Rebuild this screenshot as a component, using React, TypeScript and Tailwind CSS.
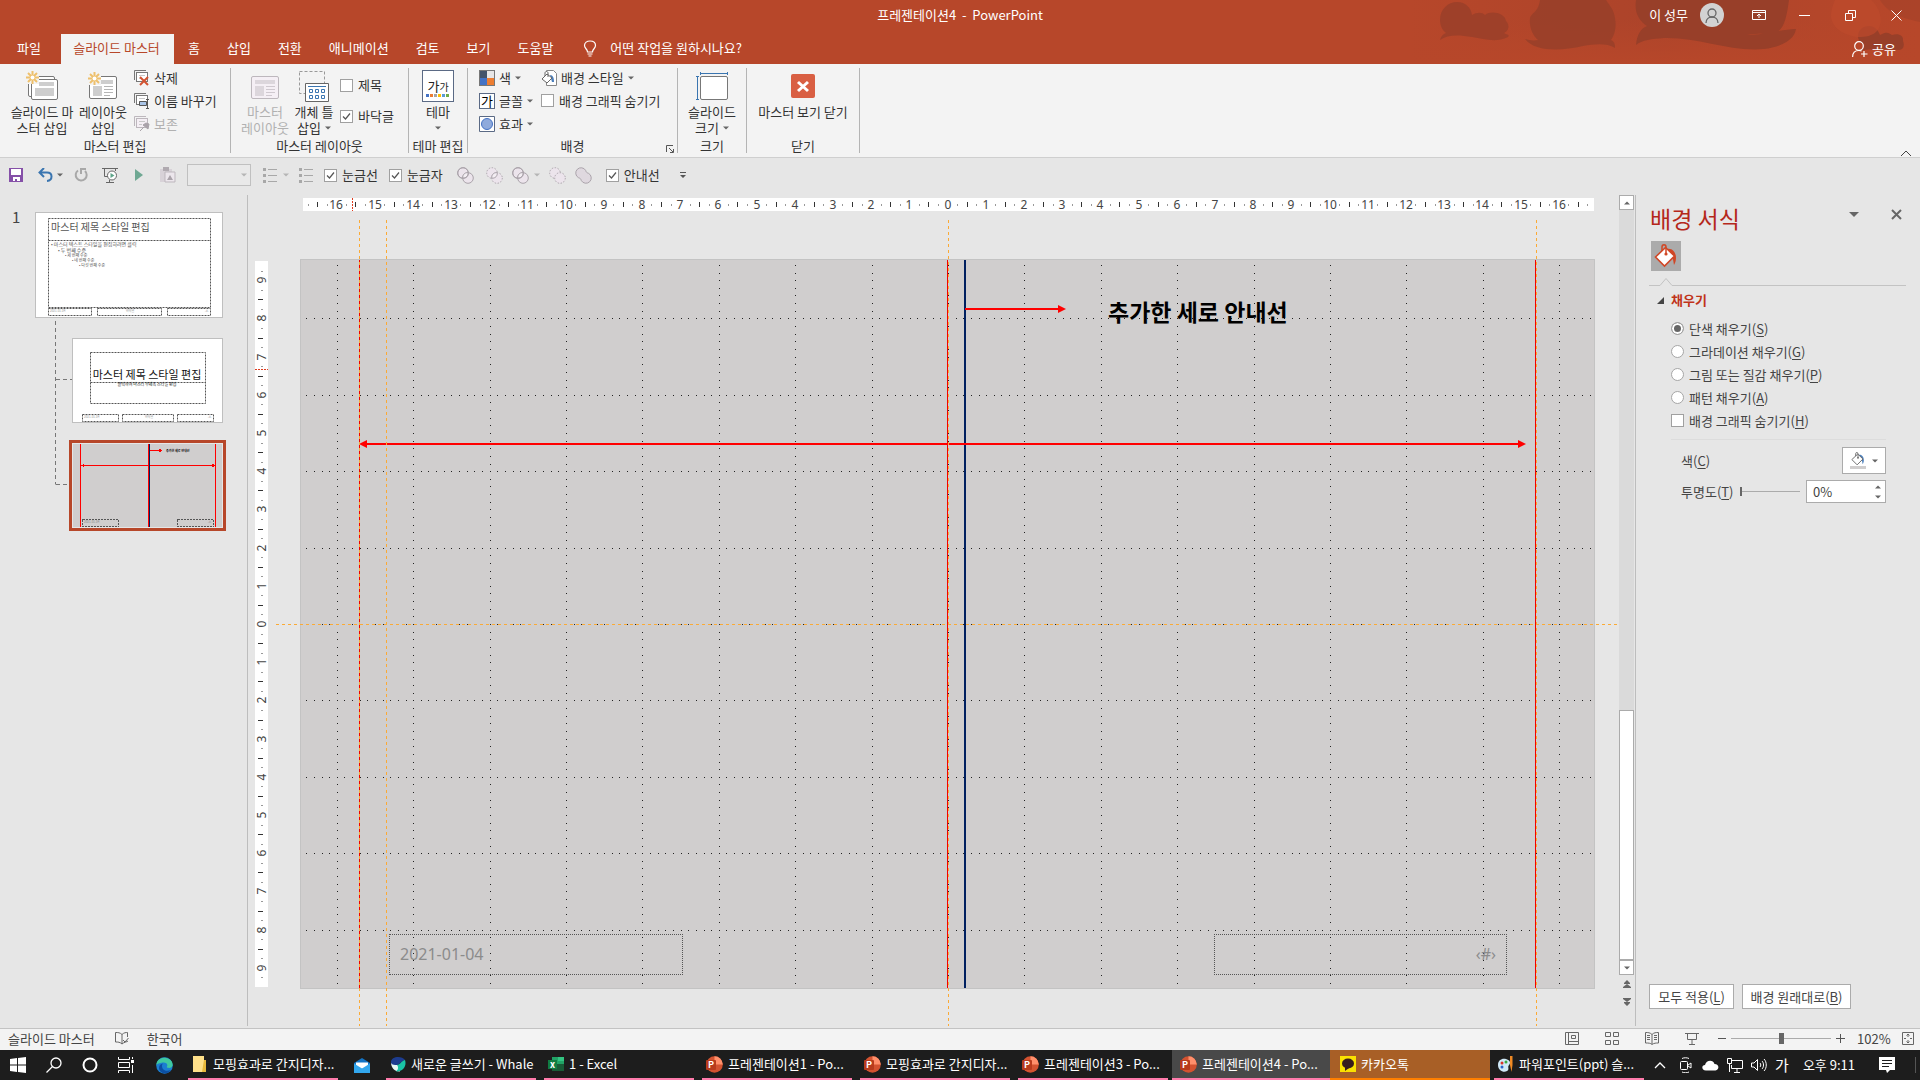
import { ReactNode, useState } from "react";
import clsx from "clsx";

const UNIT = 38.2;

const TABS = ["홈", "삽입", "전환", "애니메이션", "검토", "보기", "도움말"];

const FILL_TYPES = [
  { id: "solid", label: "단색 채우기", accel: "S" },
  { id: "gradient", label: "그라데이션 채우기", accel: "G" },
  { id: "picture", label: "그림 또는 질감 채우기", accel: "P" },
  { id: "pattern", label: "패턴 채우기", accel: "A" },
];

function Caret({ className = "text-[#666]", up = false }: { className?: string; up?: boolean }) {
  return (
    <svg width="6" height="4" viewBox="0 0 6 4" className={clsx("shrink-0", className)}>
      <path d={up ? "M0 3.5h6L3 .5z" : "M0 .5h6L3 3.5z"} fill="currentColor" />
    </svg>
  );
}

function CheckItem({ label, checked = false, id }: { label: ReactNode; checked?: boolean; id: string }) {
  return (
    <label htmlFor={id} className="flex items-center gap-[5px] whitespace-nowrap">
      <span className="relative flex">
        <input
          id={id}
          type="checkbox"
          defaultChecked={checked}
          className="peer h-[13px] w-[13px] appearance-none border border-[#a0a0a0] bg-white"
        />
        <svg viewBox="0 0 13 13" className="pointer-events-none absolute inset-0 hidden h-[13px] w-[13px] peer-checked:block">
          <path d="M3 6.5 5.5 9 10 3.5" fill="none" stroke="#555" strokeWidth="1.2" />
        </svg>
      </span>
      {label}
    </label>
  );
}

function Accel({ text, k }: { text: string; k: string }) {
  return (
    <span>
      {text}(<span className="underline underline-offset-2">{k}</span>)
    </span>
  );
}

/* ---------- title bar ---------- */

function TitleArt() {
  return (
    <svg viewBox="0 0 540 64" className="absolute top-0 right-0 h-16 w-[540px]">
      <defs>
        <linearGradient id="art" x1="0" x2="1">
          <stop offset="0" stopColor="#a5412a" stopOpacity="0" />
          <stop offset="0.5" stopColor="#a5412a" stopOpacity="0.6" />
          <stop offset="1" stopColor="#b7472a" stopOpacity="0.3" />
        </linearGradient>
        <linearGradient id="artFade" x1="0" y1="0" x2="0" y2="1">
          <stop offset="0.3" stopColor="#b7472a" stopOpacity="0" />
          <stop offset="1" stopColor="#b7472a" />
        </linearGradient>
      </defs>
      <rect x="30" width="510" height="64" fill="url(#art)" />
      <rect x="30" width="510" height="64" fill="url(#artFade)" />
      <g fill="#983f29">
        <path d="M60 20c0-11 8-18 17-18 9 0 14 6 15 13 5-3 10-3 13 0 6-5 20-2 21 6 4 4 3 10-2 12 4 2 6 2 4 4-12 6-24 2-36 0-12-2-24-3-32 3 1-4 3-6 6-7-4-3-6-8-6-13z" opacity=".8" />
        <path d="M150 18c2-6 8-5 10-18h66c4 6 8 10 9 18 2 10-1 18-4 22 4 2 4 5 4 8-8-5-20-4-32-2-22 5-48 6-58-7 4 1 8 2 13 1-6-5-9-14-8-22z" opacity=".85" />
        <path d="M256 0h153c-2 14-4 28-12 32-6 2-22 1-30 3 16 0 42-7 49-6-2 12-16 18-32 20-34 3-66-12-100-11-12 1-22 2-28 7 1-10 4-16 11-19-8-5-13-14-11-26z" />
        <path d="M478 36c0-6 5-10 11-10s9 4 11 9c7-4 9-2 12 0 6-2 12 0 11 6 2 5 0 9-4 9-14 0-26-2-38 1 1-3 2-5 4-6-5-2-7-5-7-9z" />
        <path d="M500 0h40v22c-14-3-32-8-40-22z" opacity=".4" />
      </g>
      <path d="M455 0h36c12 10 14 30 0 35-14 6-38-2-40-18 0-8 2-12 4-17z" fill="#bd4a2c" opacity=".7" />
    </svg>
  );
}

function Header() {
  return (
    <header className="relative shrink-0 bg-[#b7472a] text-white">
      <TitleArt />
      <div className="relative flex h-[30px] items-center justify-end pr-[18px]">
        <h1 className="absolute inset-x-0 text-center whitespace-pre">프레젠테이션4  -  PowerPoint</h1>
        <button className="relative mr-7 flex items-center gap-3">
          이 성무
          <svg width="24" height="24" viewBox="0 0 24 24" fill="none" stroke="#666" strokeWidth="1.3">
            <circle cx="12" cy="12" r="12" fill="#d2d2d2" stroke="none" />
            <circle cx="12" cy="10" r="4" />
            <path d="M6 20c0-8 12-8 12 0" />
          </svg>
        </button>
        <button aria-label="리본 메뉴 표시 옵션" className="relative mr-[33px]">
          <svg width="14" height="12" viewBox="0 0 14 12" fill="none" stroke="#fff">
            <path d="M.5 1.5h13v9H.5zM.5 3.5h13M7 9V5M5 7l2-2 2 2" />
          </svg>
        </button>
        <button aria-label="최소화" className="relative mr-[35px]">
          <svg width="11" height="11" stroke="#fff"><path d="M0 5.5h11" /></svg>
        </button>
        <button aria-label="이전 크기로" className="relative mr-[35px]">
          <svg width="11" height="11" viewBox="0 0 11 11" fill="none" stroke="#fff">
            <path d="M.5 3.5h7v7h-7zM3.5 3V.5h7v7H8" />
          </svg>
        </button>
        <button aria-label="닫기" className="relative">
          <svg width="11" height="11" viewBox="0 0 11 11" stroke="#fff"><path d="m.5.5 10 10M10.500.5l-10 10" /></svg>
        </button>
      </div>
      <nav className="relative mt-1 flex h-[30px] items-stretch gap-px">
        <button className="w-[60px] pr-[2px] pb-[2px]">파일</button>
        <button className="w-[113px] bg-[#f3f3f3] pr-[2px] pb-[2px] text-[#b7472a]">슬라이드 마스터</button>
        {TABS.map((t) => (
          <button key={t} className="px-[13px] pb-[2px] whitespace-nowrap">{t}</button>
        ))}
        <button className="ml-4 flex items-center gap-[13px] pb-[2px]">
          <svg width="14" height="17" viewBox="0 0 14 17" fill="none" stroke="#fff" strokeWidth="1.2">
            <path d="M4.500 12c0-3-3-3.500-3-6.500C1.500 2.500 4 1 7 1s5.500 1.500 5.500 4.500c0 3-3 3.500-3 6.500zM4.500 14h5M5.500 16h3" />
          </svg>
          어떤 작업을 원하시나요?
        </button>
        <button className="mr-[24px] ml-auto flex items-center gap-1">
          <svg width="16" height="17" viewBox="0 0 16 17" fill="none" stroke="#fff" strokeWidth="1.2">
            <circle cx="7" cy="5" r="4.300" />
            <path d="M.6 16c0-4 2.500-6.500 6.400-6.500 1 0 2 .2 2.600.6M12 10v6M9 13h6.500" />
          </svg>
          공유
        </button>
      </nav>
    </header>
  );
}

/* ---------- ribbon ---------- */

function Group({ label, className, children, launcher }: { label: string; className: string; children: ReactNode; launcher?: boolean }) {
  return (
    <section className={clsx("relative my-1 flex flex-col border-r border-[#b4b4b4]", className)}>
      <div className="flex flex-1">{children}</div>
      <h2 className="h-[14px] text-center leading-[14px] whitespace-nowrap">{label}</h2>
      {launcher && (
        <button aria-label="배경 서식" className="absolute right-[3px] bottom-0">
          <svg width="8" height="8" viewBox="0 0 8 8" fill="none" stroke="#555"><path d="M.5 7V.5H7M3 3l4 4M7.500 4v3.500H4" /></svg>
        </button>
      )}
    </section>
  );
}

function BigButton({ icon, lines, className, disabled, caret }: { icon: ReactNode; lines: string[]; className: string; disabled?: boolean; caret?: boolean }) {
  return (
    <button disabled={disabled} className={clsx("flex flex-col items-center self-start leading-4 whitespace-nowrap disabled:text-[#b1b1b1]", className)}>
      <span className="flex h-9 items-center justify-center">{icon}</span>
      {lines.map((l, i) => (
        <span key={l + i} className="flex h-4 items-center gap-1">
          {l}
          {caret && i === lines.length - 1 && <Caret />}
        </span>
      ))}
    </button>
  );
}

function Sun() {
  return (
    <g stroke="#eec06c" strokeWidth="2">
      <path d="M6.500 0v13M0 6.500h13M2 2l9 9M11 2l-9 9" />
      <circle cx="6.500" cy="6.500" r="2" fill="#fff" stroke="none" />
    </g>
  );
}

function InsertMasterIcon() {
  return (
    <svg width="32" height="30" viewBox="0 0 32 30">
      <g fill="#fff" stroke="#777">
        <rect x="2.500" y="5.500" width="26" height="20" rx="1.500" />
        <rect x="5.500" y="8.500" width="26" height="20" rx="1.500" />
      </g>
      <path d="M13 11h15v4H13zM9 17h19v8H9z" fill="#cecece" />
      <path d="M0 0h13v13H0z" fill="#f3f3f3" />
      <Sun />
    </svg>
  );
}

function LayoutIcon({ sun, dim }: { sun?: boolean; dim?: boolean }) {
  return (
    <svg width="30" height="28" viewBox="0 0 30 28">
      <rect x="1.500" y="4.500" width="27" height="22" rx="1.500" fill={dim ? "#f5eff5" : "#fff"} stroke={dim ? "#bdb7bd" : "#777"} />
      <path d="M5 8h20v4H5zM5 14h9v10H5z" fill={dim ? "#dcd6dc" : "#cecece"} />
      <path d="M16 14.500h9M16 17.500h9M16 20.500h9M16 23.500h6" stroke={dim ? "#cfc8cf" : "#b5b5b5"} />
      {sun && <path d="M0 0h13v13H0z" fill="#f3f3f3" />}
      {sun && <Sun />}
    </svg>
  );
}

function SmallStack({ kind }: { kind: "delete" | "rename" | "keep" }) {
  const line = kind === "keep" ? "#bdb7bd" : "#777";
  return (
    <svg width="16" height="16" viewBox="0 0 16 16" fill="none">
      <path d="M.5 10V.5H12" stroke={line} />
      <rect x="2.500" y="2.500" width="11" height="9" fill={kind === "keep" ? "#f5eff5" : "#fff"} stroke={line} />
      <path d="M5 5.500h6M5 8.500h3" stroke="#c9c9c9" />
      {kind === "delete" && <path d="m6 7 8 8M14 7l-8 8" stroke="#d35230" strokeWidth="2" />}
      {kind === "rename" && <path d="M5.500 8.500h7v4h-7z" fill="#a9c4e6" stroke="#555" />}
      {kind === "rename" && <path d="M13.500 7v8M12 6.500h3M12 15.500h3" stroke="#555" />}
      {kind === "keep" && <path d="m6 15 4-4M9 9l5 4 1-5-3-1z" stroke="#aaa3aa" fill="#aaa3aa" />}
    </svg>
  );
}

function SmallButton({ children, disabled }: { children: ReactNode; disabled?: boolean }) {
  return (
    <button disabled={disabled} className="flex h-[23px] items-center gap-1 pb-1 whitespace-nowrap disabled:text-[#b1b1b1]">
      {children}
    </button>
  );
}

function PaintIcon({ line = "#666", drip = "#4a7ebb", size = 16 }: { line?: string; drip?: string; size?: number }) {
  return (
    <svg width={size} height={size} viewBox="0 0 24 24" fill="none">
      <path d="M13 5c6-1 9 4 9 9 0 3-1 5-2 7-1-5-1-9-4-12z" fill={drip} />
      <path d="M1.500 13 11.500 3.500 20.500 12 10.500 22z" fill="#fff" stroke={line} strokeWidth="1.600" />
      <path d="M8 7V3c0-3 4-3 4 0v7" stroke={line} strokeWidth="1.500" />
      <circle cx="12" cy="10" r="1.600" fill={line} />
    </svg>
  );
}

function Ribbon() {
  return (
    <div className="relative flex h-[94px] shrink-0 border-b border-[#cfcfcf] bg-[#f3f3f3] text-[#333]">
      <Group label="마스터 편집" className="w-[231px]">
        <BigButton className="ml-2 w-[68px]" icon={<InsertMasterIcon />} lines={["슬라이드 마", "스터 삽입"]} />
        <BigButton className="w-[54px]" icon={<LayoutIcon sun />} lines={["레이아웃", "삽입"]} />
        <div className="ml-1 flex flex-col">
          <SmallButton><SmallStack kind="delete" />삭제</SmallButton>
          <SmallButton><SmallStack kind="rename" />이름 바꾸기</SmallButton>
          <SmallButton disabled><SmallStack kind="keep" />보존</SmallButton>
        </div>
      </Group>
      <Group label="마스터 레이아웃" className="w-[178px]">
        <BigButton className="ml-2 w-[52px]" disabled icon={<LayoutIcon dim />} lines={["마스터", "레이아웃"]} />
        <BigButton
          className="w-[46px]"
          caret
          lines={["개체 틀", "삽입"]}
          icon={
            <svg width="30" height="31" viewBox="0 0 30 31" fill="none">
              <path d="M.5.5h25v22H.5z" stroke="#999" strokeDasharray="3 2" />
              <path d="M6.500 12.500h23v18h-23z" fill="#fff" stroke="#666" />
              <path d="M9 15.500h18" stroke="#3a75b0" />
              <path d="M10.500 18.500h3v3h-3zM16.500 18.500h3v3h-3zM22.500 18.500h3v3h-3zM10.500 24.500h3v3h-3zM16.500 24.500h3v3h-3zM22.500 24.500h3v3h-3z" stroke="#3a75b0" />
            </svg>
          }
        />
        <div className="ml-[3px] flex flex-col">
          <div className="flex h-[34px] items-center"><CheckItem id="title" label="제목" /></div>
          <div className="flex h-[28px] items-center"><CheckItem id="footer" label="바닥글" checked /></div>
        </div>
      </Group>
      <Group label="테마 편집" className="w-[59px]">
        <BigButton
          className="w-full"
          lines={["테마", ""]}
          caret
          icon={
            <span className="flex h-8 w-8 flex-col items-center justify-end border border-[#5b6a85] bg-white pb-1 text-[#222]">
              <span className="leading-[15px]">가<span className="text-[10px]">가</span></span>
              <svg width="24" height="3">
                <path d="M0 0h3v3H0z" fill="#4472c4" /><path d="M4 0h3v3H4z" fill="#ed7d31" /><path d="M8 0h3v3H8z" fill="#a5a5a5" />
                <path d="M12 0h3v3h-3z" fill="#ffc000" /><path d="M16 0h3v3h-3z" fill="#5b9bd5" /><path d="M20 0h3v3h-3z" fill="#70ad47" />
              </svg>
            </span>
          }
        />
      </Group>
      <Group label="배경" className="w-[210px]" launcher>
        <div className="ml-[11px] flex w-[62px] flex-col">
          <SmallButton>
            <svg width="16" height="16">
              <path d="M0 0h16v16H0z" fill="#777" /><path d="M1 1h7v7H1z" fill="#44546a" /><path d="M8 1h7v7H8z" fill="#e7e6e6" />
              <path d="M1 8h7v7H1z" fill="#4472c4" /><path d="M8 8h7v7H8z" fill="#ed7d31" />
            </svg>
            색<Caret />
          </SmallButton>
          <SmallButton>
            <span className="flex h-4 w-4 items-center justify-center border border-[#5b6a85] bg-white leading-[14px] text-black">가</span>
            글꼴<Caret />
          </SmallButton>
          <SmallButton>
            <svg width="16" height="16"><path d="M.5.5h15v15H.5z" fill="#fff" stroke="#5b6a85" /><circle cx="8" cy="8" r="5.500" fill="#8faadc" stroke="#4472c4" /></svg>
            효과<Caret />
          </SmallButton>
        </div>
        <div className="flex flex-col">
          <SmallButton>
            <svg width="16" height="16" viewBox="0 0 16 16" fill="none">
              <path d="M5.500.5h7l3 3v12h-10z" fill="#fff" stroke="#888" />
              <path d="M9 5c3 0 4 3 4 7h-2z" fill="#4a7ebb" />
              <path d="M1 9l5-5 5 4-5 5zM4 6V3c0-2 3-2 3 0v4" fill="#fff" stroke="#666" />
            </svg>
            배경 스타일<Caret />
          </SmallButton>
          <div className="flex h-[23px] items-center pb-1"><CheckItem id="hide-bg" label="배경 그래픽 숨기기" /></div>
        </div>
      </Group>
      <Group label="크기" className="w-[69px]">
        <BigButton
          className="w-full"
          caret
          lines={["슬라이드", "크기"]}
          icon={
            <svg width="32" height="28" viewBox="0 0 32 28" fill="none">
              <path d="M4.500 1.500h27M4.500 0v3M31.500 0v3M1.500 4.500v23M0 4.500h3M0 27.500h3" stroke="#3a75b0" />
              <rect x="4.500" y="4.500" width="27" height="23" rx="1.500" fill="#fff" stroke="#777" />
            </svg>
          }
        />
      </Group>
      <Group label="닫기" className="w-[113px]">
        <BigButton
          className="w-full"
          lines={["마스터 보기 닫기"]}
          icon={
            <svg width="24" height="24" viewBox="0 0 24 24">
              <rect width="24" height="24" rx="2" fill="#d95f43" />
              <path d="m7 8 10 9M17 8 7 17" stroke="#fff" strokeWidth="3" />
            </svg>
          }
        />
      </Group>
      <button aria-label="리본 메뉴 축소" className="absolute right-2 bottom-0">
        <svg width="12" height="7" viewBox="0 0 12 7" fill="none" stroke="#444"><path d="m1 6 5-5 5 5" /></svg>
      </button>
    </div>
  );
}

/* ---------- quick access toolbar ---------- */

function ListIcon() {
  return (
    <svg width="14" height="16" viewBox="0 0 14 16" stroke="#a8a8a8">
      <path d="M5 2.500h9M5 8.500h9M5 14.500h9" />
      <path d="M0 2.500h3M0 8.500h3M0 14.500h3" strokeWidth="3" />
    </svg>
  );
}

function ShapesIcon({ kind }: { kind: "combine" | "fragment" | "subtract" | "union" }) {
  if (kind === "union")
    return (
      <svg width="17" height="17" viewBox="0 0 17 17" fill="#dfd8df" stroke="#aaa3aa">
        <path d="M10.700 3.500A5.300 5.300 0 1 0 3.500 10.700C5.200 11.200 5.700 11.700 6.300 13.500A5.300 5.300 0 1 0 13.500 6.300C11.700 5.700 11.200 5.200 10.700 3.500z" />
      </svg>
    );
  const dotted = kind === "combine" ? undefined : "1.500 1.500";
  return (
    <svg width="17" height="17" viewBox="0 0 17 17" fill="#ece4ec" stroke="#aaa3aa">
      <circle cx="6" cy="6" r="5.300" strokeDasharray={dotted} />
      <circle cx="11" cy="11" r="5.300" strokeDasharray={dotted} />
      {kind !== "subtract" && <path d="M11.200 5.700c.6 3-2 6-5.400 5.400-.6-3 2-6 5.400-5.400z" fill="#f3eef3" />}
      {kind === "combine" && <circle cx="6" cy="6" r="5.300" fill="none" />}
    </svg>
  );
}

function QuickAccess() {
  return (
    <div className="flex h-[35px] shrink-0 items-center bg-[#e6e6e6] pb-px text-[#333]">
      <button aria-label="저장" className="flex w-8 justify-center">
        <svg width="14" height="14" viewBox="0 0 14 14"><path d="M0 0h14v14H0z" fill="#8550a8" /><path d="M2 1h10v6H2zM4 9h7v4H8v-2H6v2H4z" fill="#fff" /></svg>
      </button>
      <button aria-label="실행 취소" className="flex w-9 items-center gap-1 pl-[6px]">
        <svg width="15" height="14" viewBox="0 0 15 14" fill="none" stroke="#3a75b0" strokeWidth="2"><path d="M6 0 1.500 4.500 6 9M2 4.500h7c6 0 6 8 0 8.500" /></svg>
        <Caret />
      </button>
      <button aria-label="다시 실행" className="flex w-[26px] justify-center">
        <svg width="14" height="14" viewBox="0 0 14 14" fill="none" stroke="#a8a8a8" strokeWidth="2"><path d="M4 2.500A5.500 5.500 0 1 0 11 3M7 6V1h5" /></svg>
      </button>
      <button aria-label="처음부터" className="flex w-8 justify-center">
        <svg width="16" height="16" viewBox="0 0 16 16" fill="none" stroke="#666">
          <path d="M0 1.500h16M2.500 2v7.500H6M13.500 2v2M7.500 13v2M4 15.500h8" />
          <circle cx="10" cy="8.500" r="4.500" fill="#fff" /><path d="M8.500 6v5L12.500 8.500z" fill="#5fa58a" stroke="none" />
        </svg>
      </button>
      <button aria-label="재생" className="flex w-[26px] justify-center">
        <svg width="8" height="12"><path d="M0 0v12l8-6z" fill="#6fa893" /></svg>
      </button>
      <button aria-label="붙여넣기" className="mr-[3px] flex w-8 justify-center">
        <svg width="16" height="16" viewBox="0 0 16 16"><path d="M0 2h12v13H0z" fill="#d8d2d8" /><path d="M3 0h6v4H3z" fill="#b0aab0" /><path d="M5 5h10v10H5z" fill="#ece6ec" stroke="#bdb7bd" /><path d="m7 13 3-5 3 5z" fill="#aaa3aa" /></svg>
      </button>
      <span className="relative mr-3 flex">
        <select aria-label="글꼴 크기" className="h-[22px] w-16 appearance-none border border-[#c0c0c0] bg-[#e9e9e9]"><option></option></select>
        <span className="pointer-events-none absolute inset-y-0 right-1 flex items-center"><Caret className="text-[#b5b5b5]" /></span>
      </span>
      <button aria-label="글머리 기호" className="flex w-9 items-center gap-[6px]"><ListIcon /><Caret className="text-[#b5b5b5]" /></button>
      <button aria-label="번호 매기기" className="mr-[11px]"><ListIcon /></button>
      <CheckItem id="grid" label="눈금선" checked />
      <span className="w-[11px]" />
      <CheckItem id="ruler" label="눈금자" checked />
      <div className="mx-[14px] flex items-center gap-[9px]">
        <button aria-label="병합"><ShapesIcon kind="combine" /></button>
        <button aria-label="조각" className="pl-[3px]"><ShapesIcon kind="fragment" /></button>
        <button aria-label="교차" className="flex items-center gap-[5px]"><ShapesIcon kind="combine" /><Caret className="text-[#b5b5b5]" /></button>
        <button aria-label="빼기"><ShapesIcon kind="subtract" /></button>
        <button aria-label="통합"><ShapesIcon kind="union" /></button>
      </div>
      <CheckItem id="guides" label="안내선" checked />
      <button aria-label="사용자 지정" className="ml-5">
        <svg width="6" height="7"><path d="M0 0h6v1H0zM0 3h6L3 6z" fill="#555" /></svg>
      </button>
    </div>
  );
}

/* ---------- thumbnails ---------- */

const dash = { fill: "none", stroke: "#555", strokeDasharray: "2 1" };

function Thumbnails() {
  return (
    <aside className="relative my-[2px] flex w-[248px] shrink-0 flex-col border-r border-[#bdbdbd]">
      <svg className="absolute inset-0 h-full w-full" fill="none" stroke="#777" strokeDasharray="4 3">
        <path d="M55.500 126v163.500M56 184.500h16M56 289.500h13" />
      </svg>
      <div className="relative flex pt-[17px]">
        <span className="w-[35px] pl-3 text-[15px] leading-[10px] text-[#444]">1</span>
        <button aria-label="슬라이드 마스터" className="border border-[#bfbfbf] bg-white">
          <svg width="186" height="104" viewBox="0 0 186 104" fill="#555" className="overflow-visible">
            <path d="M12.500 5.500h162v89h-162zM12.500 27.500h162M12.500 95.500h43v7h-43zM61.500 95.500h64v7h-64zM131.500 95.500h43v7h-43z" {...dash} />
            <text x="15" y="18" fontSize="10">마스터 제목 스타일 편집</text>
            <text x="15" y="33" fontSize="5">• 마스터 텍스트 스타일을 편집하려면 클릭</text>
            <text x="22" y="39" fontSize="5">• 두 번째 수준</text>
            <text x="29" y="44" fontSize="4">• 세 번째 수준</text>
            <text x="36" y="49" fontSize="4">• 네 번째 수준</text>
            <text x="43" y="54" fontSize="4">• 다섯 번째 수준</text>
            <g fill="#999" fontSize="3">
              <text x="14" y="99">2021-01-04</text>
              <text x="90" y="99">바닥글</text>
              <text x="169" y="99">‹#›</text>
            </g>
          </svg>
        </button>
      </div>
      <button aria-label="제목 슬라이드 레이아웃" className="relative mt-5 ml-[72px] w-[151px] border border-[#bfbfbf] bg-white">
        <svg width="149" height="83" viewBox="0 0 149 83" fill="#111" className="overflow-visible">
          <path d="M17.500 13.500h115v51h-115zM17.500 43.500h115M9.500 75.500h36v7h-36zM49.500 75.500h51v7h-51zM104.500 75.500h36v7h-36z" {...dash} />
          <text x="74" y="40" fontSize="11" textAnchor="middle">마스터 제목 스타일 편집</text>
          <text x="74" y="47" fontSize="4" textAnchor="middle">클릭하여 마스터 부제목 스타일 편집</text>
          <g fill="#999" fontSize="3">
            <text x="11" y="79">2021-01-04</text>
            <text x="72" y="79">바닥글</text>
            <text x="135" y="79">‹#›</text>
          </g>
        </svg>
      </button>
      <button aria-label="제목만 레이아웃" className="relative mt-[17px] ml-[69px] w-[157px] border-[3px] border-[#b7472a] bg-[#e6e6e6] p-px">
        <svg width="149" height="83" viewBox="0 0 149 83" shapeRendering="crispEdges" className="overflow-visible">
          <path d="M0 0h149v83H0z" fill="#d0cece" />
          <path d="M9.500 75.500h36v7h-36zM104.500 75.500h36v7h-36z" {...dash} />
          <path d="M7.500 0v83M75.500 0v83M142.500 0v83M8 21.500h134M76 6.500h11" stroke="#f00" />
          <path d="M76.500 0v83" stroke="#002060" />
          <path d="m8 21.500 3-2v4zM142 21.500l-3-2v4zM89 6.500l-3-2v4z" fill="#f00" />
          <text x="93" y="8" fontSize="3" fontWeight="bold">추가한 세로 안내선</text>
          <text x="11" y="79" fontSize="3" fill="#888">2021-01-04</text>
          <text x="135" y="79" fontSize="3" fill="#888">‹#›</text>
        </svg>
      </button>
    </aside>
  );
}

/* ---------- workspace ---------- */

function rulerTicks(center: number, length: number) {
  const items: { pos: number; q: number }[] = [];
  const n = Math.floor((center / UNIT) * 4);
  for (let q = -n; q <= n; q++) {
    const pos = center + (q * UNIT) / 4;
    if (pos > 1 && pos < length - 1) items.push({ pos: Math.round(pos), q });
  }
  return items;
}

function HRuler() {
  return (
    <svg width="1291" height="13" className="ml-[55px] shrink-0 overflow-visible bg-white font-['Noto_Sans']">
      {rulerTicks(644.5, 1291).map(({ pos, q }) => {
        if (q % 4 === 0)
          return <text key={q} x={pos} y="11" fontSize="12" textAnchor="middle" fill="#444">{Math.abs(q / 4)}</text>;
        return q % 2 === 0
          ? <rect key={q} x={pos} y="4" width="1" height="5" fill="#333" />
          : <rect key={q} x={pos} y="6" width="1" height="2" fill="#999" />;
      })}
      <path d="M49.500 0v13" stroke="#e03c20" strokeDasharray="2 1" />
    </svg>
  );
}

function VRuler() {
  return (
    <svg width="13" height="726" className="mt-[2px] mr-8 ml-[7px] shrink-0 overflow-visible bg-white font-['Noto_Sans']">
      {rulerTicks(363, 726).map(({ pos, q }) => {
        if (q % 4 === 0)
          return (
            <text key={q} x="0" y="0" fontSize="12" textAnchor="middle" fill="#444" transform={`translate(11 ${pos}) rotate(-90)`}>
              {Math.abs(q / 4)}
            </text>
          );
        return q % 2 === 0
          ? <rect key={q} x="3" y={pos} width="5" height="1" fill="#333" />
          : <rect key={q} x="6" y={pos} width="2" height="1" fill="#999" />;
      })}
      <path d="M0 108.500h13" stroke="#e03c20" strokeDasharray="2 1" />
    </svg>
  );
}

// dotted grid: lines every 2 units, dots every 1/5 unit
function gridPath() {
  const step = UNIT / 5;
  let d = "";
  const dot = (x: number, y: number) => {
    d += `M${Math.round(x)} ${Math.round(y)}h1v1h-1z`;
  };
  for (let k = -4; k <= 4; k++) for (let i = -84; i <= 84; i++) dot(647 + i * step, 364 + k * 2 * UNIT);
  for (let k = -8; k <= 8; k++) for (let i = -47; i <= 47; i++) dot(647 + k * 2 * UNIT, 364 + i * step);
  return d;
}

function Slide() {
  return (
    <div className="relative h-[730px] w-[1295px] shrink-0 border border-[#c3c3c3] bg-[#d0cece]">
      <svg width="1293" height="728" className="absolute inset-0" shapeRendering="crispEdges">
        <path d={gridPath()} fill="#222" />
        <path d="M58.500 0v728M646.500 0v728M1234.500 0v728" stroke="#f00000" />
        <path d="M664 0v728" stroke="#002060" strokeWidth="2" />
        <path d="M62 184h1158M664 49h96" stroke="#f00" strokeWidth="2" />
        <path d="m58 184 8-4v8zM1225 184l-8-4v8zM765 49l-8-4v8z" fill="#f00" shapeRendering="auto" />
      </svg>
      <p className="absolute top-[37px] left-[807px] text-[23px] leading-7 font-bold whitespace-nowrap text-black">추가한 세로 안내선</p>
      <div className="absolute top-[674px] left-[88px] flex h-[41px] w-[294px] items-center border border-dotted border-[#555] px-[10px] pb-[2px] font-['Noto_Sans'] text-[16px] text-[#8b8b8b]">
        2021-01-04
      </div>
      <div className="absolute top-[674px] left-[913px] flex h-[41px] w-[293px] items-center justify-end border border-dotted border-[#555] px-[10px] pb-[2px] font-['Noto_Sans'] text-[16px] text-[#8b8b8b]">
        ‹#›
      </div>
    </div>
  );
}

function Workspace() {
  return (
    <main className="relative my-[2px] min-w-0 flex-1 overflow-hidden pt-[3px]">
      <HRuler />
      <div className="mt-12 flex">
        <VRuler />
        <Slide />
      </div>
      <svg className="pointer-events-none absolute inset-0 h-full w-full" shapeRendering="crispEdges" stroke="#fbaa35" strokeDasharray="3 3">
        <path d="M111.500 25v810M138.500 25v810M700.500 25v810M1288.500 25v810M28 429.500h1342" />
      </svg>
    </main>
  );
}

function ScrollBar() {
  return (
    <div className="my-[2px] flex w-[17px] shrink-0 flex-col items-start border-r border-[#bdbdbd]">
      <button aria-label="위로" className="flex h-[15px] w-[15px] items-center justify-center border border-[#ababab] bg-white"><Caret up /></button>
      <div className="flex w-[15px] flex-1 flex-col justify-end bg-[#dadada]">
        <div className="h-1/3 border border-[#ababab] bg-white" />
      </div>
      <button aria-label="아래로" className="flex h-[15px] w-[15px] items-center justify-center border border-[#ababab] bg-white"><Caret /></button>
      <button aria-label="이전 슬라이드" className="flex h-[18px] w-[15px] items-center justify-center">
        <svg width="8" height="8"><path d="M4 0l3 3H1zM4 4l4 3H0zM1 3h6v1H1zM0 7h8v1H0z" fill="#666" /></svg>
      </button>
      <button aria-label="다음 슬라이드" className="mb-[15px] flex h-[18px] w-[15px] items-center justify-center">
        <svg width="8" height="8"><path d="M4 8 1 5h6zM4 4 0 1h8zM1 4h6v1H1zM0 0h8v1H0z" fill="#666" /></svg>
      </button>
    </div>
  );
}

/* ---------- format pane ---------- */

function FormatPane() {
  const [fill, setFill] = useState("solid");

  return (
    <aside className="flex w-[284px] shrink-0 flex-col pt-[11px] pr-[14px] pl-[13px] text-[#444]">
      <div className="flex h-7 items-center pl-px">
        <h2 className="flex-1 text-[23px] leading-7 text-[#b5281b]">배경 서식</h2>
        <button aria-label="옵션" className="mr-8 mb-2">
          <svg width="10" height="5"><path d="M0 0h10L5 5z" fill="#666" /></svg>
        </button>
        <button aria-label="닫기" className="mr-1 mb-2">
          <svg width="11" height="11" stroke="#666" strokeWidth="2"><path d="m1 1 9 9M10 1l-9 9" /></svg>
        </button>
      </div>
      <button aria-label="채우기 및 선" className="mt-[9px] ml-[2px] flex h-[30px] w-[30px] items-center justify-center bg-[#ababab]">
        <PaintIcon line="#d04726" drip="#d04726" size={24} />
      </button>
      <svg width="257" height="10" className="mt-[6px]" fill="none" stroke="#c3c3c3"><path d="M0 8.500h11l6-7 6 7h234" /></svg>
      <h3 className="mt-[3px] flex h-5 items-center gap-[7px] pl-2 font-bold text-[#c0331a]">
        <svg width="7" height="7"><path d="M7 0v7H0z" fill="#444" /></svg>
        채우기
      </h3>
      <div className="mt-[7px] ml-[22px] flex flex-col">
        {FILL_TYPES.map((f) => (
          <label key={f.id} className="flex h-[23px] items-center gap-[5px]">
            <input
              type="radio"
              name="fill"
              checked={fill === f.id}
              onChange={() => setFill(f.id)}
              className="h-[13px] w-[13px] appearance-none rounded-full border border-[#a6a6a6] bg-white checked:bg-[#666] checked:shadow-[inset_0_0_0_2px_#fff]"
            />
            <Accel text={f.label} k={f.accel} />
          </label>
        ))}
        <div className="flex h-[23px] items-center"><CheckItem id="hide" label={<Accel text="배경 그래픽 숨기기" k="H" />} /></div>
        <div className="mt-[7px] mr-5 border-t border-[#dcdcdc]" />
      </div>
      <div className="mt-[7px] mr-5 ml-8 flex h-[27px] items-center justify-between">
        <Accel text="색" k="C" />
        <button aria-label="색" className="flex h-[27px] w-11 items-center justify-center gap-[6px] border border-[#ababab] bg-white">
          <span className="flex flex-col items-center">
            <PaintIcon size={14} />
            <span className="h-[3px] w-4 bg-[#d0cece]" />
          </span>
          <Caret />
        </button>
      </div>
      <div className="mt-[6px] mr-5 ml-8 flex h-[23px] items-center">
        <label htmlFor="alpha"><Accel text="투명도" k="T" /></label>
        <input
          id="alpha"
          type="range"
          defaultValue={0}
          className="ml-auto h-[11px] w-[60px] appearance-none bg-[linear-gradient(#ababab,#ababab)] bg-[length:100%_1px] bg-center bg-no-repeat [&::-webkit-slider-thumb]:h-[9px] [&::-webkit-slider-thumb]:w-[2px] [&::-webkit-slider-thumb]:appearance-none [&::-webkit-slider-thumb]:bg-[#666]"
        />
        <span className="relative ml-[6px] flex">
          <input type="text" aria-label="투명도" defaultValue="0%" className="h-[23px] w-20 border border-[#ababab] bg-white pl-[6px]" />
          <span className="absolute inset-y-0 right-[5px] flex flex-col items-center justify-center gap-[6px]"><Caret up /><Caret /></span>
        </span>
      </div>
      <div className="mt-auto mb-[19px] flex gap-2">
        <button className="h-[25px] w-[85px] border border-[#ababab] bg-white"><Accel text="모두 적용" k="L" /></button>
        <button className="h-[25px] w-[109px] border border-[#ababab] bg-white"><Accel text="배경 원래대로" k="B" /></button>
      </div>
    </aside>
  );
}

/* ---------- status bar and taskbar ---------- */

function StatusBar() {
  return (
    <footer className="flex h-[22px] shrink-0 items-center border-t border-[#c3c3c3] bg-[#f3f3f3] pr-[6px] pb-[2px] pl-2 text-[#444]">
      <span>슬라이드 마스터</span>
      <button aria-label="맞춤법 검사" className="ml-5">
        <svg width="14" height="13" viewBox="0 0 14 13" fill="none" stroke="#666"><path d="M7 2.500C5 .5 3 .5.500.5v9.500c2.500 0 4.500 0 6.500 2M7 12V2.500c2-2 4-2 5.500-2V5M8 8l2 2 3.500-4M13 9c-1 1-4 1-6 3" /></svg>
      </button>
      <button className="ml-[18px]">한국어</button>
      <div className="ml-auto flex items-center">
        <div className="flex items-center gap-[26px]">
          <button aria-label="기본"><svg width="14" height="13" fill="none" stroke="#666"><path d="M.5.5h13v12H.5zM3.500 1v12M4 9.500h9M6.500 3.500h4v3h-4z" /></svg></button>
          <button aria-label="여러 슬라이드"><svg width="14" height="13" fill="none" stroke="#666"><path d="M.5.5h5v4h-5zM8.500.5h5v4h-5zM.5 8.500h5v4h-5zM8.500 8.500h5v4h-5z" /></svg></button>
          <button aria-label="읽기용 보기"><svg width="14" height="13" fill="none" stroke="#666"><path d="M7 2.500C5 .5 3 .5.500.5V11c3 0 5 0 6.500 1.500C9 11 11 11 13.500 11V.5C11 .5 9 .5 7 2.500zV12M2 3.500h3M2 5.500h3M2 7.500h3M9 3.500h3M9 5.500h3M9 7.500h3" /></svg></button>
          <button aria-label="슬라이드 쇼"><svg width="14" height="13" fill="none" stroke="#666"><path d="M0 1.500h14M2.500 2v5.500h9V2M7 8v4M4 12.500h6" /></svg></button>
        </div>
        <button aria-label="축소" className="ml-[19px] w-2"><svg width="8" height="9" stroke="#555"><path d="M0 4.500h8" /></svg></button>
        <input
          type="range"
          aria-label="확대/축소"
          defaultValue={51}
          className="mx-[5px] h-[13px] w-[100px] appearance-none bg-[linear-gradient(#ababab,#ababab)] bg-[length:100%_1px] bg-center bg-no-repeat [&::-webkit-slider-thumb]:h-[11px] [&::-webkit-slider-thumb]:w-[5px] [&::-webkit-slider-thumb]:appearance-none [&::-webkit-slider-thumb]:bg-[#666]"
        />
        <button aria-label="확대" className="w-2"><svg width="9" height="9" stroke="#555"><path d="M0 4.500h9M4.500 0v9" /></svg></button>
        <span className="ml-[13px] w-8">102%</span>
        <button aria-label="창에 맞춤" className="ml-[13px]"><svg width="12" height="13" fill="none" stroke="#666"><path d="M.5.5h11v12H.5zM6 2v3M6 8v3M2 6.500h2M8 6.500h2M4.500 3.500 6 2l1.500 1.500M4.500 9.500 6 11l1.500-1.500" /></svg></button>
      </div>
    </footer>
  );
}

function PptIcon() {
  return (
    <svg width="17" height="17" viewBox="0 0 17 17" className="shrink-0 overflow-visible">
      <circle cx="8.500" cy="8.500" r="8.300" fill="#d35230" />
      <path d="M8.500.2a8.300 8.300 0 0 1 8.300 8.300H8.500z" fill="#ff8f6b" />
      <rect y="4" width="10" height="10" rx="1" fill="#b83b1d" />
      <text x="5" y="12" fontSize="9" fontWeight="bold" fill="#fff" textAnchor="middle">P</text>
    </svg>
  );
}

const FolderIcon = (
  <svg width="16" height="16" viewBox="0 0 16 16"><path d="M1 0h11v16H1z" fill="#ffe08a" /><path d="M12 4h2v12h-4z" fill="#e8b93c" /></svg>
);
const WhaleIcon = (
  <svg width="16" height="16" viewBox="0 0 16 16"><path d="M1 6c0 6 4 10 9 9.500L8 9z" fill="#e9f7f5" /><path d="M1 7C0 0 12-1 15 4c-4 1-6 5-8 5S2 9 1 7z" fill="#1d3c8f" /><path d="M15 4c2 6-2 12-9 11.500C9 13 8 10 7 9c3 0 4-4 8-5z" fill="#1ac3a5" /></svg>
);
const ExcelIcon = (
  <svg width="16" height="16" viewBox="0 0 16 16" className="overflow-visible"><path d="M4 1h12v14H4z" fill="#21a366" /><path d="M4 8h12v7H4z" fill="#185c37" /><path d="M10 1h6v4h-6z" fill="#33c481" /><path d="M0 4h9v9H0z" fill="#107c41" /><text x="4.500" y="11.500" fontSize="9" fontWeight="bold" fill="#fff" textAnchor="middle">x</text></svg>
);
const KakaoIcon = (
  <svg width="16" height="16" viewBox="0 0 16 16"><path d="M0 0h16v16H0z" fill="#fae100" /><ellipse cx="8" cy="7.500" rx="6" ry="5" fill="#371d1e" /><path d="m5 11 0 4 4-3z" fill="#371d1e" /></svg>
);
const PaintAppIcon = (
  <svg width="16" height="16" viewBox="0 0 16 16"><path d="M0 9c0-5 4-7 8-6s5 4 3 6 1 4-2 6-9 0-9-6z" fill="#cfe9f7" /><circle cx="4" cy="7" r="1.500" fill="#d9342b" /><circle cx="8" cy="6" r="1.500" fill="#3aa844" /><circle cx="4" cy="11" r="1.500" fill="#2a62c9" /><path d="M12 0h2.500v9L13.500 16 12 9z" fill="#f08a24" /></svg>
);

function Task({ icon, label, active, alert }: { icon: ReactNode; label: string; active?: boolean; alert?: boolean }) {
  return (
    <button
      className={clsx(
        "flex h-[30px] shrink-0 items-center gap-[5px] border-b-2 text-left whitespace-nowrap",
        active && "w-[158px] border-[#ff7bac] bg-[#494949] pl-2",
        alert && "w-[160px] border-[#ff7f00] bg-[#a85f26] pl-[10px]",
        !active && !alert && "mx-1 w-[150px] border-[#ff7bac] pl-1"
      )}
    >
      {icon}
      {label}
    </button>
  );
}

function Taskbar() {
  return (
    <nav className="flex h-[30px] shrink-0 items-center bg-[#1d1d1d] text-white">
      <button aria-label="시작" className="flex w-9 justify-center"><svg width="16" height="16" fill="#fff"><path d="m0 2 7-1v6.500H0zM8 1l8-1v7.500H8zM0 8.500h7V15l-7-1zM8 8.500h8V16l-8-1z" /></svg></button>
      <button aria-label="검색" className="flex w-9 justify-center"><svg width="16" height="16" fill="none" stroke="#fff" strokeWidth="1.300"><circle cx="10" cy="6" r="5" /><path d="m6.500 9.500-6 6" /></svg></button>
      <button aria-label="Cortana" className="flex w-9 justify-center"><svg width="16" height="16" fill="none" stroke="#fff" strokeWidth="2"><circle cx="8" cy="8" r="6.500" /></svg></button>
      <button aria-label="작업 보기" className="flex w-9 justify-center"><svg width="16" height="16" fill="none" stroke="#fff"><path d="M.5 0v2.500h11V0M.5 5.500h11v5H.5zM.5 16v-2.500h11V16M14.500 0v2M14.500 8v8" /><path d="M13 3h3v3h-3z" fill="#fff" stroke="none" /></svg></button>
      <button aria-label="Edge" className="flex w-10 justify-center">
        <svg width="17" height="17" viewBox="0 0 17 17"><circle cx="8.500" cy="8.500" r="8.300" fill="#1b7fd1" /><path d="M.3 8C1-2 16-1 16.700 7.500c0 4-5 4-6 2.500 2-3-1-5-4-4.500S1 7 .3 8z" fill="#3fc9a0" /><path d="M6 9c0 4 4 6 9 4-4 6-12 3-12-2 0-3 2-4 4-4.500C6 7.500 6 8 6 9z" fill="#0c4fa3" /></svg>
      </button>
      <Task icon={FolderIcon} label="모핑효과로 간지디자..." />
      <button aria-label="메일" className="flex w-10 justify-center">
        <svg width="16" height="15" viewBox="0 0 16 15"><path d="M0 5 8 0l8 5v10H0z" fill="#1373c4" /><path d="M2 4.500h12V8l-6 3-6-3z" fill="#fff" /><path d="m0 5.500 8 5 8-5V15H0z" fill="#32a7ee" /></svg>
      </button>
      <Task icon={WhaleIcon} label="새로운 글쓰기 - Whale" />
      <Task icon={ExcelIcon} label="1 - Excel" />
      <Task icon={<PptIcon />} label="프레젠테이션1 - Po..." />
      <Task icon={<PptIcon />} label="모핑효과로 간지디자..." />
      <Task icon={<PptIcon />} label="프레젠테이션3 - Po..." />
      <Task icon={<PptIcon />} label="프레젠테이션4 - Po..." active />
      <Task icon={KakaoIcon} label="카카오톡" alert />
      <Task icon={PaintAppIcon} label="파워포인트(ppt) 슬..." />
      <div className="ml-auto flex items-center gap-2">
        <svg width="12" height="7" fill="none" stroke="#fff" strokeWidth="1.300" className="mr-1"><path d="m1 6 5-5 5 5" /></svg>
        <svg width="16" height="16" fill="none" stroke="#fff"><rect x="2.500" y="4.500" width="7" height="8" rx="1" /><path d="m10 8 3-2v5l-3-2M4 1.500c2-1 5-1 7 0M4 15c2 1 5 1 7 0" /></svg>
        <svg width="17" height="11" fill="#fff"><path d="M4 10.500C-1 10-.5 5 3 5c1-5 8-6 9.500-1 5 0 5 6 1 6.500z" /></svg>
        <svg width="16" height="15" fill="none" stroke="#fff"><path d="M5 2.500h10.500v8H4.500V7M10 11v3M7 14.500h6M.5.5h4v5h-4zM2.500 6v8" /></svg>
        <svg width="16" height="14" fill="none" stroke="#fff"><path d="M.5 5v4h2.500l3.500 3.500v-11L3 5zM9 5c1 1 1 3 0 4M11 3c2 2 2 6 0 8M13 1c3 3 3 9 0 12" /></svg>
        <span className="w-[13px] text-[15px] leading-5">가</span>
      </div>
      <time className="ml-[15px] whitespace-nowrap">오후 9:11</time>
      <button aria-label="알림" className="ml-6 border-r border-[#555] pr-5">
        <svg width="16" height="16"><path d="M0 0h16v13h-5l-3 3-1-3H0z" fill="#fff" /><path d="M3 3.500h10M3 6.500h10M3 9.500h7" stroke="#1d1d1d" /></svg>
      </button>
      <span className="w-1" />
    </nav>
  );
}

export default function App() {
  return (
    <div className="flex h-screen flex-col overflow-hidden bg-[#e6e6e6] font-['Noto_Sans_CJK_KR',sans-serif] text-[13px] leading-4">
      <Header />
      <Ribbon />
      <QuickAccess />
      <div className="flex min-h-0 flex-1">
        <Thumbnails />
        <Workspace />
        <ScrollBar />
        <FormatPane />
      </div>
      <StatusBar />
      <Taskbar />
    </div>
  );
}
